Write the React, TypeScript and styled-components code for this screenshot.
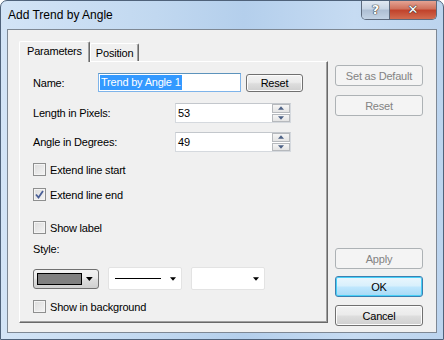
import styled, { createGlobalStyle } from 'styled-components';

const GlobalStyle = createGlobalStyle`
  html, body {
    margin: 0;
    padding: 0;
    background: #ffffff;
  }
  body {
    font-family: "Liberation Sans", Arial, sans-serif;
    font-size: 11px;
    letter-spacing: -0.2px;
    color: #000;
  }
`;

const Window = styled.div`
  width: 444px;
  height: 340px;
  box-sizing: border-box;
  border: 1px solid #4f627a;
  border-radius: 7px 7px 0 0;
  background: linear-gradient(90deg, #d3e4f6 0%, #c1d8f0 35%, #b4cfec 55%, #c6dbf2 80%, #bcd4ee 100%);
  display: flex;
  flex-direction: column;
  overflow: hidden;
`;

const TitleBar = styled.div`
  height: 28px;
  display: flex;
  align-items: flex-start;
  justify-content: space-between;
  padding: 0 6px 0 7px;
`;

const Title = styled.div`
  font-size: 12px;
  letter-spacing: 0;
  line-height: 12px;
  margin-top: 8px;
  color: #000;
`;

const CaptionGroup = styled.div`
  display: flex;
  height: 19px;
  margin-top: -1px;
  border: 1px solid #5d6a7d;
  border-top: none;
  border-radius: 0 0 5px 5px;
  overflow: hidden;
`;

const CaptionButton = styled.div<{ $close?: boolean }>`
  width: ${p => (p.$close ? 46 : 27)}px;
  display: flex;
  align-items: center;
  justify-content: center;
  background: ${p =>
    p.$close
      ? 'linear-gradient(180deg, #e7a99a 0%, #d0735e 45%, #c1432c 55%, #d26c50 100%)'
      : 'linear-gradient(180deg, #e3ebf4 0%, #c9d6e5 45%, #aebfd4 55%, #c3d3e5 100%)'};
  border-left: ${p => (p.$close ? '1px solid #5d6a7d' : 'none')};
  color: #fff;
  font-family: "DejaVu Sans", sans-serif;
  font-weight: bold;
  font-size: 13px;
  letter-spacing: 0;
  text-shadow: 0 0 1px #333, 0 0 1px #333, 0 0 1px #333;
`;

const Client = styled.div`
  flex: 1;
  margin: 0 6px 6px 6px;
  border: 1px solid #7e8894;
  background: #f0f0f0;
  display: flex;
  padding: 11px 0 6px 11px;
  gap: 7px;
`;

const TabArea = styled.div`
  width: 309px;
  display: flex;
  flex-direction: column;
  margin-bottom: 3px;
`;

const TabStrip = styled.div`
  display: flex;
  align-items: flex-end;
  height: 20px;
  position: relative;
  z-index: 1;
`;

const Tab = styled.div<{ $active?: boolean }>`
  height: ${p => (p.$active ? 21 : 18)}px;
  padding: 0 ${p => (p.$active ? 7 : 5)}px;
  box-sizing: border-box;
  display: flex;
  align-items: center;
  background: #f0f0f0;
  border: 1px solid #fff;
  border-right: 1px solid #696969;
  border-bottom: none;
  border-radius: 2px 2px 0 0;
  margin-bottom: ${p => (p.$active ? -1 : 0)}px;
  padding-bottom: ${p => (p.$active ? 3 : 0)}px;
  box-shadow: inset -1px 0 0 #a0a0a0;
`;

const Panel = styled.div`
  flex: 1;
  border-top: 1px solid #fff;
  border-left: 1px solid #fff;
  border-right: 1px solid #696969;
  border-bottom: 1px solid #696969;
  box-shadow: inset -1px -1px 0 #a0a0a0;
  display: flex;
  flex-direction: column;
  padding: 11px 0 0 13px;
`;

const Row = styled.div<{ $top: number; $h: number }>`
  display: flex;
  align-items: center;
  height: ${p => p.$h}px;
  margin-top: ${p => p.$top}px;
`;

const Label = styled.div<{ $w?: number }>`
  width: ${p => (p.$w ? `${p.$w}px` : 'auto')};
  flex-shrink: 0;
  white-space: nowrap;
`;

const NameInput = styled.div`
  width: 143px;
  height: 19px;
  box-sizing: border-box;
  border: 1px solid #7eb4ea;
  border-top-color: #5c93bc;
  background: #fff;
  display: flex;
  align-items: center;
  padding-left: 1px;
`;

const Selected = styled.span`
  background: #3399ff;
  color: #fff;
  line-height: 15px;
  padding: 0 1px;
`;

const PushButton = styled.div<{ $w: number; $h?: number; $disabled?: boolean; $default?: boolean }>`
  width: ${p => p.$w}px;
  height: ${p => p.$h ?? 21}px;
  box-sizing: border-box;
  display: flex;
  align-items: center;
  justify-content: center;
  border-radius: 3px;
  border: 1px solid ${p => (p.$disabled ? '#adb2b5' : p.$default ? '#3c7fb1' : '#707070')};
  color: ${p => (p.$disabled ? '#838383' : '#000')};
  background: ${p =>
    p.$disabled
      ? '#f4f4f4'
      : p.$default
      ? 'linear-gradient(180deg, #eaf6fd 0%, #d9f0fc 45%, #bee6fd 55%, #a7d9f5 100%)'
      : 'linear-gradient(180deg, #f2f2f2 0%, #ebebeb 45%, #dddddd 55%, #cfcfcf 100%)'};
  box-shadow: ${p =>
    p.$default ? 'inset 0 0 0 1px #48d0f7' : p.$disabled ? 'none' : 'inset 0 0 0 1px #fcfcfc'};
`;

const SpinBox = styled.div`
  width: 116px;
  height: 20px;
  box-sizing: border-box;
  border: 1px solid #d5d9de;
  border-top-color: #c3c7cc;
  background: #fff;
  display: flex;
`;

const SpinText = styled.div`
  flex: 1;
  display: flex;
  align-items: center;
  padding-left: 2px;
`;

const SpinButtons = styled.div`
  width: 18px;
  display: flex;
  flex-direction: column;
  gap: 1px;
  background: #fff;
`;

const SpinButton = styled.div`
  flex: 1;
  box-sizing: border-box;
  border: 1px solid #b6b9bd;
  background: linear-gradient(180deg, #f6f6f6, #e4e4e4);
  display: flex;
  align-items: center;
  justify-content: center;
`;

const CheckBox = styled.div`
  width: 13px;
  height: 13px;
  box-sizing: border-box;
  border: 1px solid #8e8f8f;
  background: linear-gradient(135deg, #dcdcdc 0%, #f4f4f4 100%);
  box-shadow: inset 0 0 0 1px #f4f4f4;
  margin-right: 4px;
  display: flex;
  align-items: center;
  justify-content: center;
`;

const ColorCombo = styled.div`
  width: 66px;
  height: 20px;
  box-sizing: border-box;
  border: 1px solid #707070;
  border-radius: 3px;
  background: linear-gradient(180deg, #f2f2f2 0%, #ebebeb 45%, #dddddd 55%, #cfcfcf 100%);
  display: flex;
  align-items: center;
  padding: 0 5px 0 3px;
  gap: 4px;
`;

const Swatch = styled.div`
  width: 47px;
  height: 12px;
  box-sizing: border-box;
  border: 1px solid #000;
  background: #808080;
`;

const Combo = styled.div<{ $w: number }>`
  width: ${p => p.$w}px;
  height: 23px;
  box-sizing: border-box;
  border: 1px solid #e3e3e3;
  border-radius: 2px;
  background: #fff;
  display: flex;
  align-items: center;
  padding: 0 5px 0 6px;
  margin-left: 9px;
`;

const LineSample = styled.div`
  width: 46px;
  height: 1px;
  background: #000;
`;

const Spacer = styled.div`
  flex: 1;
`;

const SideColumn = styled.div`
  width: 88px;
  display: flex;
  flex-direction: column;
  padding-top: 24px;
`;

const Arrow = ({ up, color = '#000', w = 7 }: { up?: boolean; color?: string; w?: number }) => (
  <svg width={w} height={4} viewBox="0 0 7 4" style={{ display: 'block' }}>
    <path d={up ? 'M0 4 L3.5 0 L7 4 Z' : 'M0 0 L7 0 L3.5 4 Z'} fill={color} />
  </svg>
);

const Check = () => (
  <svg width="9" height="9" viewBox="0 0 9 9">
    <path d="M1 4.5 L3.5 7.5 L8 1" stroke="#4a5f97" strokeWidth="1.8" fill="none" />
  </svg>
);

const Spinner = ({ value }: { value: string }) => (
  <SpinBox>
    <SpinText>{value}</SpinText>
    <SpinButtons>
      <SpinButton>
        <Arrow up color="#4d6185" w={6} />
      </SpinButton>
      <SpinButton>
        <Arrow color="#4d6185" w={6} />
      </SpinButton>
    </SpinButtons>
  </SpinBox>
);

export default function App() {
  return (
    <>
      <GlobalStyle />
      <Window>
        <TitleBar>
          <Title>Add Trend by Angle</Title>
          <CaptionGroup>
            <CaptionButton>?</CaptionButton>
            <CaptionButton $close>✕</CaptionButton>
          </CaptionGroup>
        </TitleBar>
        <Client>
          <TabArea>
            <TabStrip>
              <Tab $active>Parameters</Tab>
              <Tab>Position</Tab>
            </TabStrip>
            <Panel>
              <Row $top={0} $h={19}>
                <Label $w={65}>Name:</Label>
                <NameInput>
                  <Selected>Trend by Angle 1</Selected>
                </NameInput>
                <PushButton $w={57} $h={18} style={{ marginLeft: 5 }}>
                  Reset
                </PushButton>
              </Row>
              <Row $top={11} $h={20}>
                <Label $w={142}>Length in Pixels:</Label>
                <Spinner value="53" />
              </Row>
              <Row $top={9} $h={20}>
                <Label $w={142}>Angle in Degrees:</Label>
                <Spinner value="49" />
              </Row>
              <Row $top={11} $h={13}>
                <CheckBox />
                <Label>Extend line start</Label>
              </Row>
              <Row $top={12} $h={13}>
                <CheckBox>
                  <Check />
                </CheckBox>
                <Label>Extend line end</Label>
              </Row>
              <Row $top={20} $h={13}>
                <CheckBox />
                <Label>Show label</Label>
              </Row>
              <Row $top={8} $h={14}>
                <Label>Style:</Label>
              </Row>
              <Row $top={11} $h={23}>
                <ColorCombo>
                  <Swatch />
                  <Arrow />
                </ColorCombo>
                <Combo $w={74}>
                  <LineSample />
                  <Spacer />
                  <Arrow w={6} />
                </Combo>
                <Combo $w={74}>
                  <Spacer />
                  <Arrow w={6} />
                </Combo>
              </Row>
              <Row $top={10} $h={13}>
                <CheckBox />
                <Label>Show in background</Label>
              </Row>
            </Panel>
          </TabArea>
          <SideColumn>
            <PushButton $w={88} $disabled>Set as Default</PushButton>
            <PushButton $w={88} $disabled style={{ marginTop: 9 }}>Reset</PushButton>
            <Spacer />
            <PushButton $w={88} $disabled>Apply</PushButton>
            <PushButton $w={88} $default style={{ marginTop: 7 }}>OK</PushButton>
            <PushButton $w={88} style={{ marginTop: 8 }}>Cancel</PushButton>
          </SideColumn>
        </Client>
      </Window>
    </>
  );
}
